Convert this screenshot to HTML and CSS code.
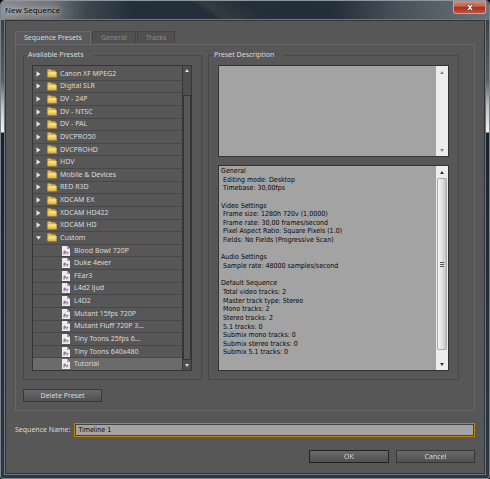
FILE: index.html
```html
<!DOCTYPE html>
<html lang="en">
<head>
<meta charset="utf-8">
<title>New Sequence</title>
<link rel="stylesheet" href="styles.css">
</head>
<body>
<svg class="defs" aria-hidden="true">
  <defs>
    <linearGradient id="gold" x1="0" y1="0" x2="0" y2="1">
      <stop offset="0" stop-color="#fff0a0"/><stop offset="1" stop-color="#e2b036"/>
    </linearGradient>
    <symbol id="folder" viewBox="0 0 10 9">
      <path d="M0.4 7.8V1.2Q.4.5 1 .5H3.8L4.9 1.6H8.4V3" fill="#e8bc48" stroke="#b88c2c" stroke-width=".5"/>
      <path d="M1 3H9.6V8.3H.8Z" fill="url(#gold)" stroke="#c79a35" stroke-width=".4"/>
    </symbol>
    <symbol id="preset" viewBox="0 0 8 10">
      <path d="M0 0H5L8 3V10H0Z" fill="#ececec"/>
      <path d="M5 0V3H8Z" fill="#a5a5a5"/>
      <path d="M2 8.5V5.2H3.1Q4 5.3 4 6T3.1 6.9H2M5 8.5V6.2M5 7Q5.4 6.2 6.4 6.4" fill="none" stroke="#6a4a72" stroke-width=".8"/>
    </symbol>
    <symbol id="right" viewBox="0 0 5 6"><path d="M.5 .3L4.5 3L.5 5.7Z" fill="#e4e4e4"/></symbol>
    <symbol id="down" viewBox="0 0 5 6"><path d="M0 1.2H5L2.5 4.8Z" fill="#e4e4e4"/></symbol>
  </defs>
</svg>
<main class="window">
  <header class="titlebar">
    <h1>New Sequence</h1>
    <button class="close" type="button" aria-label="Close"><svg viewBox="0 0 8 7"><path d="M.7.5H2.8L4 2L5.2.5H7.3L5.2 3.5L7.3 6.5H5.2L4 5L2.8 6.5H.7L2.8 3.5Z" fill="#fff" stroke="#5d3038" stroke-width=".6"/></svg></button>
  </header>
  <form class="content">
    <nav class="tabs">
      <button class="tab active" type="button">Sequence Presets</button>
      <button class="tab" type="button">General</button>
      <button class="tab" type="button">Tracks</button>
    </nav>
    <section class="panel">
      <div class="columns">
        <fieldset class="group">
          <legend>Available Presets</legend>
          <div class="tree">
            <ul>
              <li><svg class="arrow"><use href="#right"/></svg><svg class="folder"><use href="#folder"/></svg>Canon XF MPEG2</li>
              <li><svg class="arrow"><use href="#right"/></svg><svg class="folder"><use href="#folder"/></svg>Digital SLR</li>
              <li><svg class="arrow"><use href="#right"/></svg><svg class="folder"><use href="#folder"/></svg>DV - 24P</li>
              <li><svg class="arrow"><use href="#right"/></svg><svg class="folder"><use href="#folder"/></svg>DV - NTSC</li>
              <li><svg class="arrow"><use href="#right"/></svg><svg class="folder"><use href="#folder"/></svg>DV - PAL</li>
              <li><svg class="arrow"><use href="#right"/></svg><svg class="folder"><use href="#folder"/></svg>DVCPRO50</li>
              <li><svg class="arrow"><use href="#right"/></svg><svg class="folder"><use href="#folder"/></svg>DVCPROHD</li>
              <li><svg class="arrow"><use href="#right"/></svg><svg class="folder"><use href="#folder"/></svg>HDV</li>
              <li><svg class="arrow"><use href="#right"/></svg><svg class="folder"><use href="#folder"/></svg>Mobile &amp; Devices</li>
              <li><svg class="arrow"><use href="#right"/></svg><svg class="folder"><use href="#folder"/></svg>RED R3D</li>
              <li><svg class="arrow"><use href="#right"/></svg><svg class="folder"><use href="#folder"/></svg>XDCAM EX</li>
              <li><svg class="arrow"><use href="#right"/></svg><svg class="folder"><use href="#folder"/></svg>XDCAM HD422</li>
              <li><svg class="arrow"><use href="#right"/></svg><svg class="folder"><use href="#folder"/></svg>XDCAM HD</li>
              <li><svg class="arrow"><use href="#down"/></svg><svg class="folder"><use href="#folder"/></svg>Custom</li>
              <li class="child"><svg class="preset"><use href="#preset"/></svg>Blood Bowl 720P</li>
              <li class="child"><svg class="preset"><use href="#preset"/></svg>Duke 4ever</li>
              <li class="child"><svg class="preset"><use href="#preset"/></svg>FEar3</li>
              <li class="child"><svg class="preset"><use href="#preset"/></svg>L4d2 ljud</li>
              <li class="child"><svg class="preset"><use href="#preset"/></svg>L4D2</li>
              <li class="child"><svg class="preset"><use href="#preset"/></svg>Mutant 15fps 720P</li>
              <li class="child"><svg class="preset"><use href="#preset"/></svg>Mutant Fluff 720P 3...</li>
              <li class="child"><svg class="preset"><use href="#preset"/></svg>Tiny Toons 25fps 6...</li>
              <li class="child"><svg class="preset"><use href="#preset"/></svg>Tiny Toons 640x480</li>
              <li class="child selected"><svg class="preset"><use href="#preset"/></svg>Tutorial</li>
            </ul>
            <div class="dark-scroll"><i class="up"></i><span></span><i class="down"></i></div>
          </div>
        </fieldset>
        <fieldset class="group wide">
          <legend>Preset Description</legend>
          <div class="box description">
            <textarea aria-label="Preset Description" readonly></textarea>
            <div class="light-scroll idle"><i class="up"></i><i class="down"></i></div>
          </div>
          <div class="box details">
            <div class="lines">
              <p>General</p>
              <p class="in">Editing mode: Desktop</p>
              <p class="in">Timebase: 30,00fps</p>
              <p></p>
              <p>Video Settings</p>
              <p class="in">Frame size: 1280h 720v (1,0000)</p>
              <p class="in">Frame rate: 30,00 frames/second</p>
              <p class="in">Pixel Aspect Ratio: Square Pixels (1.0)</p>
              <p class="in">Fields: No Fields (Progressive Scan)</p>
              <p></p>
              <p>Audio Settings</p>
              <p class="in">Sample rate: 48000 samples/second</p>
              <p></p>
              <p>Default Sequence</p>
              <p class="in">Total video tracks: 2</p>
              <p class="in">Master track type: Stereo</p>
              <p class="in">Mono tracks: 2</p>
              <p class="in">Stereo tracks: 2</p>
              <p class="in">5.1 tracks: 0</p>
              <p class="in">Submix mono tracks: 0</p>
              <p class="in">Submix stereo tracks: 0</p>
              <p class="in">Submix 5.1 tracks: 0</p>
            </div>
            <div class="light-scroll"><i class="up"></i><span class="thumb"><b></b></span><i class="down"></i></div>
          </div>
        </fieldset>
      </div>
      <button class="btn" type="button">Delete Preset</button>
    </section>
    <div class="name-row">
      <label for="name">Sequence Name:</label>
      <div class="field"><input id="name" type="text" value="Timeline 1" autofocus></div>
    </div>
    <div class="actions">
      <button class="btn default" type="button">OK</button>
      <button class="btn" type="button">Cancel</button>
    </div>
  </form>
</main>
</body>
</html>
```
FILE: styles.css
```css
* { box-sizing: border-box; }
body, h1, p, ul, fieldset { margin: 0; padding: 0; }
body { background: #050607; font: 7px/10px "Noto Sans", sans-serif; color: #dadada; }
button, input, textarea { font: inherit; color: inherit; margin: 0; padding: 0; border: 0; border-radius: 0; outline: 0; }
.defs { position: absolute; width: 0; height: 0; }

.window {
  display: flex; flex-direction: column; height: 100vh; min-height: 479px;
  padding: 0 4px 4px; border: 1px solid #7c838a; border-top-color: #90969c; border-radius: 5px 5px 3px 3px;
  background: linear-gradient(#30363c, #596168 80px, #b9bec2 104px, #f4f4f4 131px, #17222e 132px, #2b3743);
}
.titlebar {
  display: flex; justify-content: space-between; align-items: flex-start; height: 19px; margin: 0 -4px; padding: 0 3px 0 4px;
  border-radius: 4px 4px 0 0;
  background: linear-gradient(35deg, transparent 42%, #4d4d4d66 44%, transparent 52%), linear-gradient(90deg, #8b8d90, #73777b 50px, #3d4750 85px, #23303b 130px, #222e39 330px, #49535c 400px, #68727b);
}
h1 { font: 8px/18px "Open Sans", sans-serif; color: #000; text-shadow: 0 0 4px #ddd, 0 0 6px #ccc; }
.close {
  display: flex; align-items: center; justify-content: center; width: 33px; height: 13px;
  border: 1px solid #b8a5a5; border-top: 0; border-radius: 0 0 3px 3px; background: linear-gradient(#cf8f83, #c4604e 45%, #a82b18 50%, #c84e38);
}
.close svg { width: 8px; height: 7px; }

.content {
  flex: 1; min-height: 0; display: flex; flex-direction: column; padding: 10px 9px 10px 9px;
  background: #575757; border: 1px solid #303438; outline: 1px solid #6e7880;
}
.tabs { display: flex; gap: 1px; height: 13px; }
.tab { padding: 0 8px; height: 12px; background: #505050; border: 1px solid #444; border-bottom: 0; color: #8b8b8b; }
.tab.active { height: 13px; background: #5a5a5a; border-color: #696969; color: #dadada; }
.panel { flex: 1; min-height: 0; display: flex; flex-direction: column; align-items: flex-start; gap: 9px; padding: 5px 15px 8px 7px; border: 1px solid #666; }
.columns { flex: 1; min-height: 0; align-self: stretch; display: flex; gap: 6px; }
.group { display: flex; flex-direction: column; gap: 8px; width: 179px; min-width: 0; min-height: 0; padding: 5px 9px 8px 8px; border: 1px solid #484848; }
.group.wide { flex: 1; padding-left: 9px; }
legend { height: 10px; margin-left: -6px; padding: 0 10px 0 2px; }

.tree { flex: 1; min-height: 0; display: flex; border: 1px solid #353535; }
.tree ul { flex: 1; min-width: 0; display: flex; flex-direction: column; padding-top: 2px; list-style: none; }
.tree li { flex: 1; min-height: 0; display: flex; align-items: center; padding-left: 3px; border-bottom: 1px solid #484848; white-space: nowrap; }
.tree .child { padding-left: 29px; }
.tree .selected { background: #6b6b6b; border: 0; }
.arrow { width: 5px; height: 6px; margin-right: 6px; }
.folder { width: 10px; height: 9px; margin-right: 3px; }
.preset { width: 8px; height: 10px; margin-right: 4px; }
.dark-scroll { width: 9px; display: flex; flex-direction: column; align-items: center; border-left: 1px solid #353535; background: #4e4e4e; }
.dark-scroll span { flex: 1; width: 8px; border: 1px solid #353535; background: #595959; margin-top: 23px; }
.up, .down { width: 0; height: 0; border: solid transparent; border-width: 0 2px 3px; border-bottom-color: #ddd; margin-top: 3px; }
.down { border-width: 3px 2px 0; border-top-color: #ddd; margin: 4px 0 3px; }

.box { display: flex; border: 1px solid #333; background: #a3a3a3; min-height: 0; }
.description { height: 92px; flex: none; }
.description textarea { flex: 1; min-width: 0; resize: none; background: transparent; }
.details { flex: 1; font: 7px/9px "DejaVu Sans Condensed", sans-serif; color: #080808; }
.lines { flex: 1; min-width: 0; display: flex; flex-direction: column; padding: 1px 2px 13px; white-space: nowrap; }
.lines p { flex: 1; min-height: 0; }
.lines .in { padding-left: 2px; }
.light-scroll { width: 12px; display: flex; flex-direction: column; align-items: center; justify-content: space-between; background: #ededed; }
.light-scroll i { border-bottom-color: #333; margin-top: 5px; }
.light-scroll .down { border-bottom-color: transparent; border-top-color: #333; margin: 4px 0; }
.light-scroll.idle .up { border-bottom-color: #888; }
.light-scroll.idle .down { border-top-color: #888; }
.thumb { flex: 1; width: 10px; margin: 4px 0 9px; display: flex; align-items: center; justify-content: center; border: 1px solid #aaa; border-radius: 1px; background: linear-gradient(90deg, #f5f5f5, #e3e3e3 50%, #bfbfbf); }
.thumb b { width: 4px; height: 5px; background: repeating-linear-gradient(#555 0 1px, transparent 1px 2px); }

.btn { width: 79px; height: 13px; background: linear-gradient(#6a6a6a, #505050); border: 1px solid #383838; color: #dadada; line-height: 10px; }
.btn.default { width: 80px; border-color: #222; }
.name-row { display: flex; align-items: center; gap: 4px; margin-top: 12px; }
.field { flex: 1; height: 14px; border: 1px solid #b8860b; }
.field input { width: 100%; height: 12px; display: block; padding-left: 2px; border: 1px solid #444; background: #a3a3a3; color: #080808; font: 7px/10px "DejaVu Sans Condensed", sans-serif; }
.actions { display: flex; justify-content: flex-end; gap: 7px; margin-top: 13px; }
```
